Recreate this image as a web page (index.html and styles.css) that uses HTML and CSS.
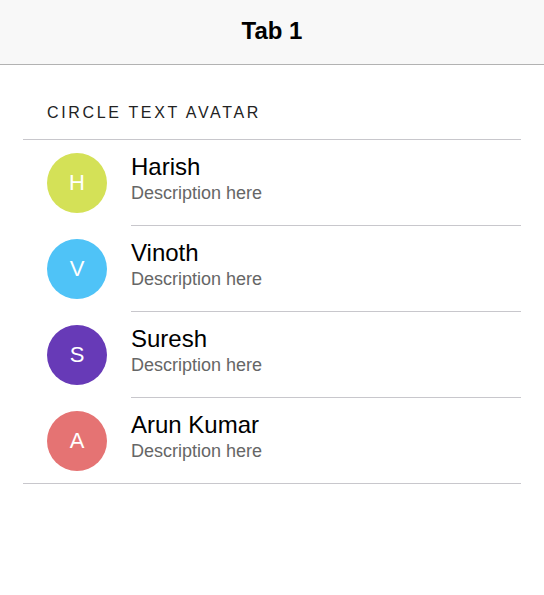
FILE: index.html
```html
<!DOCTYPE html>
<html>
<head>
<meta charset="utf-8">
<link rel="stylesheet" href="styles.css">
</head>
<body>
<div class="toolbar"><div class="title">Tab 1</div></div>
<div class="content">
  <div class="list">
    <div class="list-header">CIRCLE TEXT AVATAR</div>
    <div class="item">
      <div class="avatar lime">H</div>
      <div class="inner"><div class="name">Harish</div><div class="desc">Description here</div></div>
    </div>
    <div class="item">
      <div class="avatar blue">V</div>
      <div class="inner"><div class="name">Vinoth</div><div class="desc">Description here</div></div>
    </div>
    <div class="item">
      <div class="avatar purple">S</div>
      <div class="inner"><div class="name">Suresh</div><div class="desc">Description here</div></div>
    </div>
    <div class="item">
      <div class="avatar red">A</div>
      <div class="inner"><div class="name">Arun Kumar</div><div class="desc">Description here</div></div>
    </div>
  </div>
</div>
</body>
</html>
```
FILE: styles.css
```css
html, body {
  margin: 0;
  padding: 0;
  background: #fff;
  font-family: "Liberation Sans", Arial, sans-serif;
}
.toolbar {
  height: 64px;
  background: #f8f8f8;
  border-bottom: 1px solid #b2b2b2;
  display: flex;
  justify-content: center;
}
.title {
  font-size: 24px;
  font-weight: bold;
  color: #000;
  line-height: 62px;
}
.content {
  padding: 0 23px;
}
.list {
  border-bottom: 1px solid #c8c7cc;
}
.list-header {
  padding: 38px 0 16px 24px;
  font-size: 16px;
  line-height: 20px;
  letter-spacing: 2.65px;
  color: #222;
  border-bottom: 1px solid #c8c7cc;
}
.item {
  display: flex;
  padding-left: 24px;
}
.avatar {
  width: 60px;
  height: 60px;
  border-radius: 50%;
  margin: 13px 24px 13px 0;
  color: #fff;
  font-size: 22px;
  display: flex;
  align-items: center;
  justify-content: center;
  flex-shrink: 0;
}
.item:last-child .avatar { margin-bottom: 12px; }
.lime { background: #d4e157; }
.blue { background: #4fc3f7; }
.purple { background: #673ab7; }
.red { background: #e57373; }
.inner {
  flex: 1;
  padding-top: 15px;
  border-bottom: 1px solid #c8c7cc;
}
.item:last-child .inner { border-bottom: none; }
.name {
  font-size: 24px;
  line-height: 24px;
  color: #000;
}
.desc {
  margin-top: 4px;
  font-size: 18px;
  line-height: 20px;
  color: #666;
}
```
